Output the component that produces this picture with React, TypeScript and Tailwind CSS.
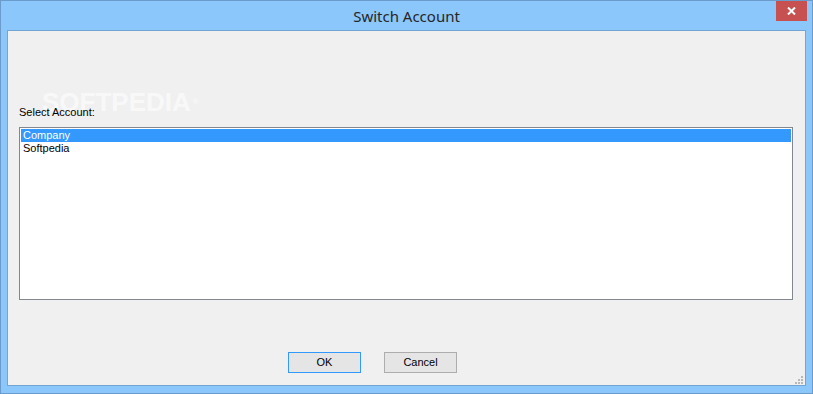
const ListItem: React.FC<{ label: string; selected?: boolean }> = ({ label, selected }) => {
  return (
    <div
      className={
        selected
          ? "h-[13px] leading-[13px] pl-[2px] bg-[#3399ff] text-white"
          : "h-[13px] leading-[13px] pl-[2px] text-black"
      }
    >
      {label}
    </div>
  )
}

const App: React.FC = () => {
  return (
    <div className="w-[813px] h-[394px] border border-[#6a9bcb] bg-[#8bc7fa] flex flex-col font-['Liberation_Sans',Arial,sans-serif]">
      {/* title bar */}
      <div className="relative h-[29px] shrink-0 flex items-center justify-center">
        <span className="text-[15px] text-[#262626] font-['Noto_Sans',sans-serif] mt-[1px]">Switch Account</span>
        <div className="absolute right-[5px] top-0 w-[31px] h-[20px] bg-[#c75050] flex items-center justify-center">
          <svg width="9" height="8" viewBox="0 0 9 8">
            <path d="M1 0.5 L8 7.5 M8 0.5 L1 7.5" stroke="#ffffff" strokeWidth="2" />
          </svg>
        </div>
      </div>

      {/* client area */}
      <div className="relative flex-1 mx-[6px] mb-[7px] border border-[#72a5d5] bg-[#f0f0f0] flex flex-col text-[11px]">
        <div className="absolute left-[34px] top-[56px] text-[26px] leading-[30px] font-bold text-white/60 font-['Liberation_Sans',sans-serif] select-none">
          SOFTPEDIA<span className="text-[8px] align-top ml-[2px]">®</span>
        </div>

        <div className="relative mt-[75px] ml-[11px] h-[13px] leading-[13px] text-black">Select Account:</div>

        <div className="relative mt-[8px] ml-[11px] mr-[12px] h-[173px] border border-[#828790] bg-white p-[1px]">
          <ListItem label="Company" selected />
          <ListItem label="Softpedia" />
        </div>

        <div className="flex gap-[23px] ml-[280px] mt-[52px]">
          <button className="w-[73px] h-[21px] border border-[#3399ff] bg-[#e5e5e5] text-black text-[11px] leading-[19px]">
            OK
          </button>
          <button className="w-[73px] h-[21px] border border-[#adadad] bg-[#e5e5e5] text-black text-[11px] leading-[19px]">
            Cancel
          </button>
        </div>

        <svg className="absolute right-[1px] bottom-[1px]" width="9" height="8" viewBox="0 0 9 8">
          <rect x="6" y="0" width="2" height="2" fill="#b8b8b8" />
          <rect x="3" y="3" width="2" height="2" fill="#b8b8b8" />
          <rect x="6" y="3" width="2" height="2" fill="#b8b8b8" />
          <rect x="0" y="6" width="2" height="2" fill="#b8b8b8" />
          <rect x="3" y="6" width="2" height="2" fill="#b8b8b8" />
          <rect x="6" y="6" width="2" height="2" fill="#b8b8b8" />
        </svg>
      </div>
    </div>
  )
}

export default App
